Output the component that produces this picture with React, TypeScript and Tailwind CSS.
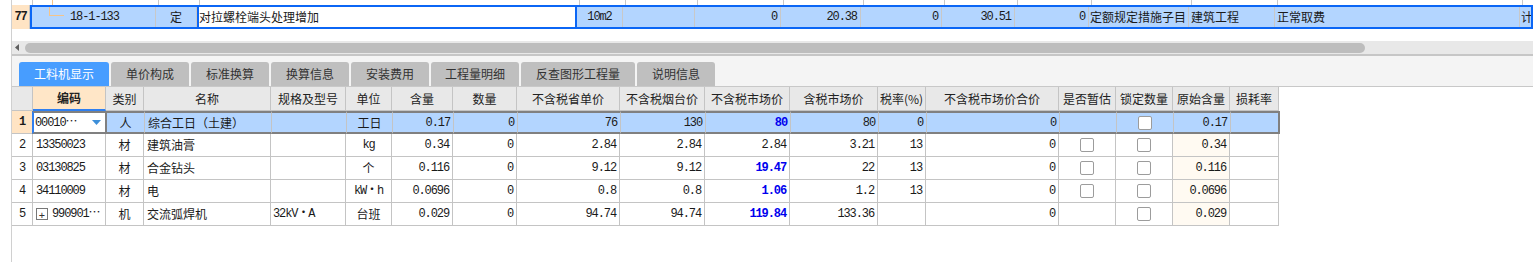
import React from 'react';

const cjk = "font-['Noto_Sans_CJK_SC','Noto_Sans',sans-serif] text-[12px]";
const num = "font-['Liberation_Mono','Noto_Sans_CJK_SC',monospace] text-[12px] tracking-[-1.1px]";

type TopCell = { w: string; text?: string; align?: string; mono?: boolean; white?: boolean };

const topCells: TopCell[] = [
  { w: 'w-[126px]' },
  { w: 'w-[41px]', text: '定', align: 'justify-center' },
  { w: 'w-[380px]', text: '对拉螺栓端头处理增加', align: 'justify-start pl-[2px]', white: true },
  { w: 'w-[46px]', text: '10m2', align: 'justify-center', mono: true },
  { w: 'w-[72px]' },
  { w: 'w-[86px]', text: '0', align: 'justify-end pr-[3px]', mono: true },
  { w: 'w-[80px]', text: '20.38', align: 'justify-end pr-[3px]', mono: true },
  { w: 'w-[81px]', text: '0', align: 'justify-end pr-[3px]', mono: true },
  { w: 'w-[73px]', text: '30.51', align: 'justify-end pr-[3px]', mono: true },
  { w: 'w-[74px]', text: '0', align: 'justify-end pr-[3px]', mono: true },
  { w: 'w-[100px]', text: '定额规定措施子目', align: 'justify-start pl-[1px]' },
  { w: 'w-[86px]', text: '建筑工程', align: 'justify-start pl-[2px]' },
  { w: 'w-[245px]', text: '正常取费', align: 'justify-start pl-[2px]' },
];

const cols = [
  { w: 'w-[73px]', label: '编码' },
  { w: 'w-[38px]', label: '类别' },
  { w: 'w-[127px]', label: '名称' },
  { w: 'w-[75px]', label: '规格及型号' },
  { w: 'w-[46px]', label: '单位' },
  { w: 'w-[61px]', label: '含量' },
  { w: 'w-[64px]', label: '数量' },
  { w: 'w-[103px]', label: '不含税省单价' },
  { w: 'w-[85px]', label: '不含税烟台价' },
  { w: 'w-[85px]', label: '不含税市场价' },
  { w: 'w-[88px]', label: '含税市场价' },
  { w: 'w-[48px]', label: '税率(%)' },
  { w: 'w-[133px]', label: '不含税市场价合价' },
  { w: 'w-[57px]', label: '是否暂估' },
  { w: 'w-[57px]', label: '锁定数量' },
  { w: 'w-[57px]', label: '原始含量' },
  { w: 'w-[49px]', label: '损耗率' },
];

type Row = {
  n: string;
  code: string;
  type: string;
  name: string;
  spec: string;
  unit: string;
  unitMono: boolean;
  qty: string;
  p1: string;
  p2: string;
  p3: string;
  blue: boolean;
  p4: string;
  tax: string;
  est: boolean;
  orig: string;
  expand?: boolean;
};

const rows: Row[] = [
  { n: '1', code: '00010⋯', type: '人', name: '综合工日（土建）', spec: '', unit: '工日', unitMono: false, qty: '0.17', p1: '76', p2: '130', p3: '80', blue: true, p4: '80', tax: '0', est: false, orig: '0.17' },
  { n: '2', code: '13350023', type: '材', name: '建筑油膏', spec: '', unit: 'kg', unitMono: true, qty: '0.34', p1: '2.84', p2: '2.84', p3: '2.84', blue: false, p4: '3.21', tax: '13', est: true, orig: '0.34' },
  { n: '3', code: '03130825', type: '材', name: '合金钻头', spec: '', unit: '个', unitMono: false, qty: '0.116', p1: '9.12', p2: '9.12', p3: '19.47', blue: true, p4: '22', tax: '13', est: true, orig: '0.116' },
  { n: '4', code: '34110009', type: '材', name: '电', spec: '', unit: 'kW・h', unitMono: true, qty: '0.0696', p1: '0.8', p2: '0.8', p3: '1.06', blue: true, p4: '1.2', tax: '13', est: true, orig: '0.0696' },
  { n: '5', code: '990901⋯', type: '机', name: '交流弧焊机', spec: '32kV・A', unit: '台班', unitMono: false, qty: '0.029', p1: '94.74', p2: '94.74', p3: '119.84', blue: true, p4: '133.36', tax: '', est: false, orig: '0.029', expand: true },
];

const tabs = [
  { label: '工料机显示', w: 'w-[90px]' },
  { label: '单价构成', w: 'w-[78px]' },
  { label: '标准换算', w: 'w-[78px]' },
  { label: '换算信息', w: 'w-[78px]' },
  { label: '安装费用', w: 'w-[78px]' },
  { label: '工程量明细', w: 'w-[88px]' },
  { label: '反查图形工程量', w: 'w-[114px]' },
  { label: '说明信息', w: 'w-[78px]' },
];

function Check() {
  return <span className="w-[14px] h-[14px] rounded-[2px] border border-[#9c9c9c] bg-white" />;
}

function DataRow({ r, sel }: { r: Row; sel: boolean }) {
  const edge = sel
    ? 'border-y-2 border-y-[#808080] border-r border-r-[#c4c4c4]'
    : 'border-r border-b border-[#c4c4c4]';
  const bg = sel ? 'bg-[#b3d5ff]' : 'bg-white';
  const right = 'justify-end pr-[3px]';
  const cells: { el: React.ReactNode; cls: string }[] = [
    { el: <span className={cjk}>{r.type}</span>, cls: 'justify-center' },
    { el: <span className={cjk}>{r.name}</span>, cls: 'justify-start pl-[3px]' },
    { el: <span className={num}>{r.spec}</span>, cls: 'justify-start pl-[2px]' },
    { el: <span className={r.unitMono ? num : cjk}>{r.unit}</span>, cls: 'justify-center' },
    { el: <span className={num}>{r.qty}</span>, cls: right },
    { el: <span className={num}>0</span>, cls: right },
    { el: <span className={num}>{r.p1}</span>, cls: right },
    { el: <span className={num}>{r.p2}</span>, cls: right },
    { el: <span className={`${num} ${r.blue ? 'font-bold text-[#0000ee]' : ''}`}>{r.p3}</span>, cls: right },
    { el: <span className={num}>{r.p4}</span>, cls: right },
    { el: <span className={num}>{r.tax}</span>, cls: right },
    { el: <span className={num}>0</span>, cls: right },
    { el: r.est ? <Check /> : null, cls: 'justify-center' },
    { el: <Check />, cls: 'justify-center' },
    { el: <span className={num}>{r.orig}</span>, cls: `${right} ${sel ? '' : 'bg-[#fffaf2]'}` },
    { el: null, cls: '' },
  ];
  return (
    <div className="flex h-[23px] text-[#1a1a1a]">
      <div
        className={`${sel ? 'w-[20px] bg-[#ffe4c4] font-bold border-b border-[#c4c4c4]' : 'w-[21px] bg-white border-r border-b border-[#c4c4c4]'} flex items-center justify-center ${num}`}
      >
        {r.n}
      </div>
      {sel ? (
        <div className="w-[75px] border-l-2 border-l-[#2f7ff0] border-y-2 border-y-[#808080] border-r-2 border-r-[#808080] bg-white flex items-center pl-[1px] pr-[4px]">
          <span className={`${num} flex-1`}>{r.code}</span>
          <svg width="9" height="5" viewBox="0 0 9 5">
            <polygon points="0,0 9,0 4.5,5" fill="#3d8fd9" />
          </svg>
        </div>
      ) : (
        <div className={`w-[73px] ${edge} ${bg} flex items-center pl-[3px]`}>
          {r.expand && (
            <span className="w-[12px] h-[12px] mr-[4px] border border-[#777] flex items-center justify-center text-[11px] leading-none text-[#333]">+</span>
          )}
          <span className={num}>{r.code}</span>
        </div>
      )}
      {cells.map((c, i) => (
        <div
          key={i}
          className={`${cols[i + 1].w} flex items-center ${c.cls} ${
            sel && i === cells.length - 1 ? 'border-y-2 border-y-[#808080] border-r-2 border-r-[#808080]' : edge
          } ${c.cls.includes('bg-') ? '' : bg}`}
        >
          {c.el}
        </div>
      ))}
    </div>
  );
}

export default function App() {
  return (
    <div className="w-[1533px] h-[262px] bg-white overflow-hidden flex text-[#1a1a1a]">
      <div className="w-[11px] shrink-0" />
      <div className="flex-1 min-w-0 border-l border-[#d0d0d0] flex flex-col">
        {/* partial previous row */}
        <div className="flex h-[5px]">
          <div className="w-[21px] border-r border-[#c8c8c8]" />
          <div className="w-[126px] border-r border-[#c8c8c8]">
            <div className="ml-[19px] w-px h-full bg-[#f5c48a]" />
          </div>
          {topCells.slice(1).map((c, i) => (
            <div key={i} className={`${c.w} border-r border-[#c8c8c8]`} />
          ))}
          <div className="flex-1" />
        </div>

        {/* row 77 */}
        <div className="flex h-[24px]">
          <div className={`w-[21px] bg-[#ffe4c4] border-r border-[#c8c8c8] flex items-center justify-center font-bold ${num}`}>77</div>
          <div className="flex-1 flex bg-[#b3d5ff] outline-2 -outline-offset-2 outline-[#0b66f5]">
            <div className="w-[126px] border-r border-[#c8c8c8] flex items-center">
              <div className="ml-[19px] w-[15px] h-[11px] self-start border-l border-b border-[#f5c48a]" />
              <span className={`${num} ml-[6px]`}>18-1-133</span>
            </div>
            {topCells.slice(1).map((c, i) => (
              <div
                key={i}
                className={`${c.w} flex items-center ${c.align ?? ''} ${
                  c.white ? 'bg-white outline-2 -outline-offset-2 outline-[#0b66f5]' : 'border-r border-[#c8c8c8]'
                }`}
              >
                <span className={c.mono ? num : cjk}>{c.text}</span>
              </div>
            ))}
            <div className="flex-1 flex items-center pl-[1px] overflow-hidden">
              <span className={cjk}>计</span>
            </div>
          </div>
        </div>

        <div className="h-[12px]" />

        {/* horizontal scrollbar */}
        <div className="h-[13px] bg-[#e8e8e8] flex items-center">
          <svg className="ml-[3px]" width="4" height="7" viewBox="0 0 4 7">
            <polygon points="4,0 4,7 0,3.5" fill="#5f5f5f" />
          </svg>
          <div className="ml-[6px] w-[1340px] h-[10px] rounded-full bg-[#bdbdbd]" />
        </div>
        <div className="h-[2px] bg-[#c6c6c6]" />

        {/* tabs */}
        <div className="h-[30px] bg-[#f4f4f4] pt-[6px] pl-[7px] flex gap-[2px]">
          {tabs.map((t, i) => (
            <div
              key={t.label}
              className={`${t.w} h-[24px] rounded-t-[3px] flex items-center justify-center ${cjk} ${
                i === 0 ? 'bg-[#479dff] text-white' : 'bg-[#bfbfbf] text-[#333]'
              }`}
            >
              {t.label}
            </div>
          ))}
        </div>

        {/* lower grid */}
        <div className="flex-1 border-t border-[#c8c8c8] bg-white">
          <div className="flex h-[24px] text-[#222]">
            <div className="w-[21px] bg-[#e8e8e8] border-r border-b border-[#c4c4c4]" />
            {cols.map((c, i) => (
              <div
                key={c.label}
                className={`${c.w} flex items-center justify-center ${cjk} border-r border-[#c4c4c4] ${
                  i === 0 ? 'bg-[#ffe6c7] font-bold border-b-2 border-b-[#2f7ff0]' : 'bg-[#e8e8e8] border-b'
                }`}
              >
                {c.label}
              </div>
            ))}
          </div>
          {rows.map((r, i) => (
            <DataRow key={r.n} r={r} sel={i === 0} />
          ))}
        </div>
      </div>
    </div>
  );
}
